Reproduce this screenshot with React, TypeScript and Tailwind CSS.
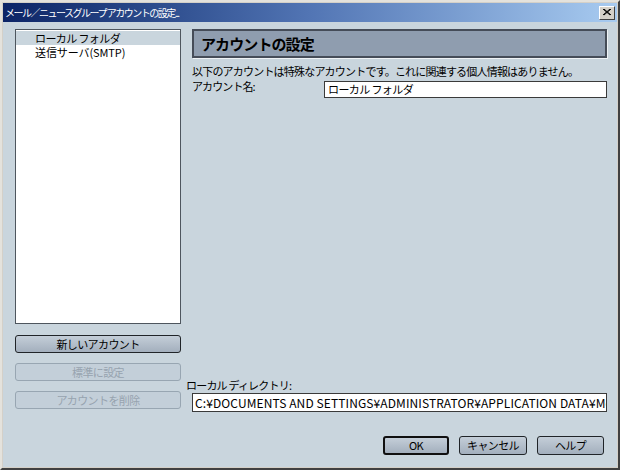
import React from "react"

const jp = { fontFamily: '"Noto Sans CJK JP", "Noto Sans", sans-serif' }

function Btn({ label, disabled, primary, className }: { label: string; disabled?: boolean; primary?: boolean; className?: string }) {
  return (
    <button
      className={
        "h-[18px] rounded-[3px] flex items-center justify-center text-[11px] leading-none tracking-[-0.6px] whitespace-nowrap " +
        (disabled
          ? "border border-[#98a6b2] bg-[#c3cfd9] text-[#97a3af] "
          : primary
            ? "border-2 border-[#101010] bg-gradient-to-b from-[#c4ced8] to-[#a3afbd] text-black "
            : "border border-[#202428] bg-gradient-to-b from-[#c4ced8] to-[#a3afbd] text-black ") +
        (className ?? "")
      }
    >
      {label}
    </button>
  )
}

export default function App() {
  return (
    <div
      style={jp}
      className="w-[620px] h-[470px] flex flex-col bg-[#d4d0c8] border-t-2 border-l-2 border-t-[#e4e2dc] border-l-[#e4e2dc] border-r-2 border-b-2 border-r-[#404040] border-b-[#404040] p-[1px] select-none"
    >
      {/* Title bar */}
      <div className="h-[19px] shrink-0 flex items-center justify-between pl-[2px] pr-[2px] bg-gradient-to-r from-[#0c2466] via-[#5275b4] to-[#a8cbf0]">
        <span className="text-white text-[10px] leading-none tracking-[-1.5px] whitespace-nowrap">
          メール／ニュースグループ アカウントの設定...
        </span>
        <div className="w-[16px] h-[14px] bg-[#d4d0c8] border border-t-white border-l-white border-r-[#404040] border-b-[#404040] flex items-center justify-center">
          <svg width="8" height="7" viewBox="0 0 8 7">
            <path d="M0 0 L7 6 M1 0 L8 6 M7 0 L0 6 M8 0 L1 6" stroke="#000" strokeWidth="1" />
          </svg>
        </div>
      </div>

      {/* Body */}
      <div className="flex-1 flex flex-col bg-[#c9d5dd] pl-[12px] pr-[10px] pt-[7px]">
        <div className="h-[383px] flex gap-[11px]">
          {/* Left column */}
          <div className="w-[166px] shrink-0 flex flex-col">
            <div className="h-[295px] bg-white border border-[#4e565e] pt-[1px]">
              <div className="h-[14px] bg-[#c9d5dd] pl-[19px] text-[11px] leading-[14px] tracking-[-0.6px] text-black whitespace-nowrap">
                ローカル フォルダ
              </div>
              <div className="h-[14px] pl-[19px] text-[11px] leading-[14px] tracking-[-0.1px] text-black whitespace-nowrap">
                送信サーバ(SMTP)
              </div>
            </div>
            <Btn label="新しいアカウント" className="mt-[11px]" />
            <Btn label="標準に設定" disabled className="mt-[10px]" />
            <Btn label="アカウントを削除" disabled className="mt-[10px]" />
          </div>

          {/* Right column */}
          <div className="flex-1 min-w-0 flex flex-col">
            <div className="h-[29px] bg-[#8f9daf] border-2 border-[#454c58] shadow-[1px_1px_0_#eef2f5] flex items-center pl-[7px]">
              <span className="text-[15px] font-bold tracking-[-0.9px] text-black leading-none">アカウントの設定</span>
            </div>
            <div className="mt-[6px] text-[11px] leading-[14px] tracking-[-0.8px] text-black whitespace-nowrap">
              以下のアカウントは特殊なアカウントです。これに関連する個人情報はありません。
            </div>
            <div className="mt-[1px] flex items-start">
              <span className="w-[132px] shrink-0 text-[11px] leading-[14px] tracking-[-0.9px] text-black">アカウント名:</span>
              <div className="flex-1 h-[17px] mt-[2px] bg-white border border-[#3a3a3a] pl-[3px] text-[11px] leading-[15px] tracking-[-0.6px] text-black">
                ローカル フォルダ
              </div>
            </div>
            <div className="flex-1" />
            <div className="-ml-[6px] text-[11px] leading-[14px] tracking-[-0.8px] text-black">ローカル ディレクトリ:</div>
            <div className="mt-[1px] h-[19px] bg-white border border-[#3a3a3a] pl-[2px] text-[12px] leading-[17px] tracking-[0.1px] text-black whitespace-nowrap overflow-hidden">
              C:¥DOCUMENTS AND SETTINGS¥ADMINISTRATOR¥APPLICATION DATA¥Mozilla¥Profiles
            </div>
          </div>
        </div>

        {/* Bottom buttons */}
        <div className="mt-[24px] flex justify-end gap-[10px] pr-[3px]">
          <Btn label="OK" primary className="w-[66px] h-[19px]" />
          <Btn label="キャンセル" className="w-[68px] h-[19px]" />
          <Btn label="ヘルプ" className="w-[67px] h-[19px]" />
        </div>
      </div>
    </div>
  )
}
